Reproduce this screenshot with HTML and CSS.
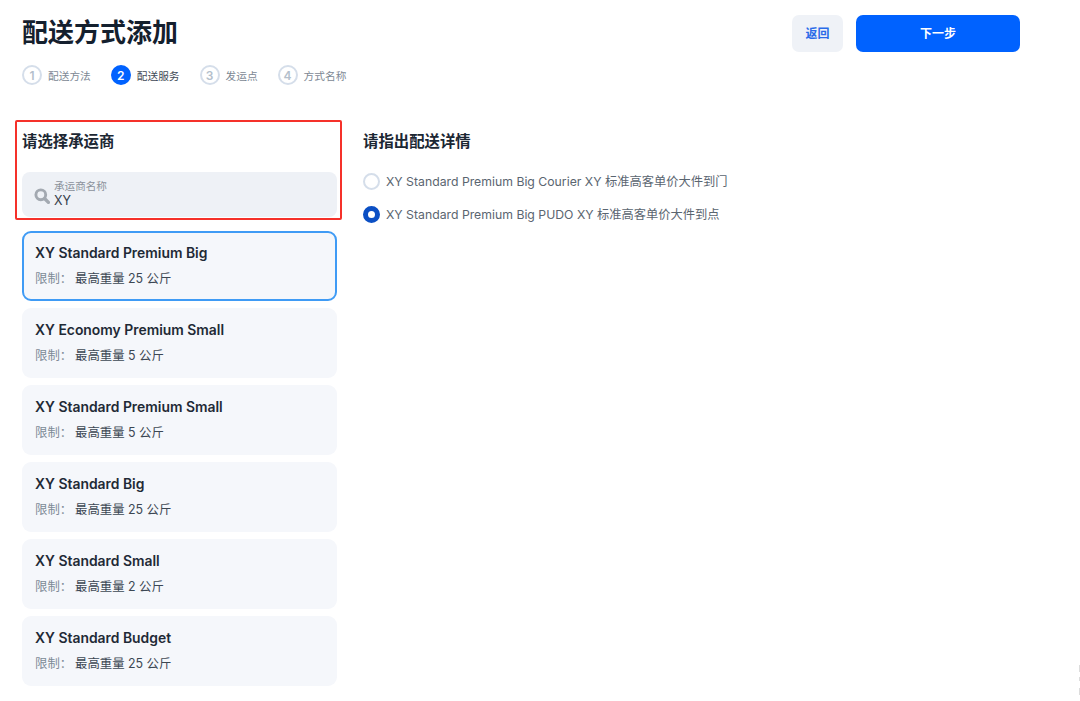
FILE: index.html
```html
<!DOCTYPE html>
<html lang="zh">
<head>
<meta charset="utf-8">
<title>配送方式添加</title>
<link rel="stylesheet" href="styles.css">
</head>
<body>
<div class="page">
  <header class="header">
    <div class="header-left">
      <h1 class="title">配送方式添加</h1>
      <ol class="steps">
        <li class="step"><span class="step-num">1</span><span class="step-label">配送方法</span></li>
        <li class="step step-active"><span class="step-num">2</span><span class="step-label">配送服务</span></li>
        <li class="step"><span class="step-num">3</span><span class="step-label">发运点</span></li>
        <li class="step"><span class="step-num">4</span><span class="step-label">方式名称</span></li>
      </ol>
    </div>
    <div class="actions">
      <button class="btn btn-back">返回</button>
      <button class="btn btn-next">下一步</button>
    </div>
  </header>
  <main class="main">
    <section class="col-left">
      <h2 class="heading">请选择承运商</h2>
      <div class="search">
        <svg class="search-icon" width="16" height="16" viewBox="0 0 16 16"><circle cx="6.8" cy="6.8" r="4.9" fill="none" stroke="#a3a9b1" stroke-width="2.9"/><path d="M10.8 10.8 14.4 14.4" stroke="#a3a9b1" stroke-width="3.4" stroke-linecap="round"/></svg>
        <div class="search-text">
          <div class="search-label">承运商名称</div>
          <div class="search-value">XY</div>
        </div>
      </div>
      <div class="cards">
        <div class="card card-selected"><div class="card-title">XY Standard Premium Big</div><div class="card-meta"><span class="meta-key">限制：</span><span class="meta-val">最高重量 25 公斤</span></div></div>
        <div class="card"><div class="card-title">XY Economy Premium Small</div><div class="card-meta"><span class="meta-key">限制：</span><span class="meta-val">最高重量 5 公斤</span></div></div>
        <div class="card"><div class="card-title">XY Standard Premium Small</div><div class="card-meta"><span class="meta-key">限制：</span><span class="meta-val">最高重量 5 公斤</span></div></div>
        <div class="card"><div class="card-title">XY Standard Big</div><div class="card-meta"><span class="meta-key">限制：</span><span class="meta-val">最高重量 25 公斤</span></div></div>
        <div class="card"><div class="card-title">XY Standard Small</div><div class="card-meta"><span class="meta-key">限制：</span><span class="meta-val">最高重量 2 公斤</span></div></div>
        <div class="card"><div class="card-title">XY Standard Budget</div><div class="card-meta"><span class="meta-key">限制：</span><span class="meta-val">最高重量 25 公斤</span></div></div>
      </div>
      <div class="highlight"></div>
    </section>
    <section class="col-right">
      <h2 class="heading">请指出配送详情</h2>
      <div class="radios">
        <div class="radio-row"><span class="radio"></span><span class="radio-label">XY Standard Premium Big Courier XY 标准高客单价大件到门</span></div>
        <div class="radio-row"><span class="radio radio-on"></span><span class="radio-label">XY Standard Premium Big PUDO XY 标准高客单价大件到点</span></div>
      </div>
    </section>
  </main>
  <div class="edge-marks"><span class="edge-mark edge-mark-a"></span><span class="edge-mark edge-mark-b"></span><span class="edge-mark edge-mark-c"></span></div>
</div>
</body>
</html>
```
FILE: styles.css
```css
* { box-sizing: border-box; }
html, body { margin: 0; padding: 0; background: #fff; }
body {
  font-family: Inter, "Noto Sans CJK SC", sans-serif;
  color: #1c2733;
  overflow: hidden;
}
.page { position: relative; width: 1080px; height: 701px; padding: 15px 60px 0 22px; }

.header { display: flex; justify-content: space-between; align-items: flex-start; }
.title { margin: 0; font-size: 26px; line-height: 36px; font-weight: 700; color: #14202e; }
.steps { display: flex; list-style: none; margin: 14px 0 0; padding: 0; gap: 20px; }
.step { display: flex; align-items: center; gap: 6px; height: 20px; }
.step-num {
  width: 20px; height: 20px; border-radius: 50%;
  border: 2px solid #d5deea; color: #b4bfcc;
  font-size: 12px; font-weight: 600;
  display: flex; align-items: center; justify-content: center;
}
.step-label { font-size: 10.7px; color: #7d8894; }
.step-active .step-num { background: #0062ff; border-color: #0062ff; color: #fff; }
.step-active .step-label { color: #3f4a56; }

.actions { display: flex; gap: 13px; }
.btn {
  height: 37px; border: 0; border-radius: 7px;
  font-family: inherit; font-size: 12px; font-weight: 600; padding: 0 0 2px;
}
.btn-back { width: 51px; background: #eff2f7; color: #2a6be8; }
.btn-next { width: 164px; background: #0062ff; color: #fff; }

.main { display: flex; gap: 26px; margin-top: 37px; }
.col-left { width: 315px; position: relative; }
.heading { margin: 0; font-size: 15.4px; line-height: 22px; font-weight: 700; color: #1c2733; padding-top: 9px; box-sizing: content-box; height: 22px; }

.search {
  margin-top: 19px; height: 45px; border-radius: 8px; background: #eef1f6;
  display: flex; align-items: center; padding-left: 12px; gap: 4px;
}
.search-icon { flex: none; margin-top: 2px; }
.search-text { margin-top: -1px; }
.search-label { font-size: 10.6px; line-height: 12px; color: #8b929b; margin-top: 1px; }
.search-value { font-size: 12.5px; line-height: 15px; color: #36404b; }

.cards { display: flex; flex-direction: column; gap: 7.1px; margin-top: 14px; }
.card {
  height: 70px; border-radius: 9px; background: #f5f7fb;
  padding: 12px 13px 0;
}
.card-selected { border: 2px solid #3f9bf5; padding: 10px 11px 0; }
.card-title { font-size: 13.9px; line-height: 20px; font-weight: 600; color: #1f2a36; }
.card-meta { display: flex; margin-top: 6px; font-size: 12.4px; line-height: 20px; }
.meta-key { width: 40px; color: #7d8a96; }
.meta-val { color: #3c4753; }

.highlight {
  position: absolute; left: -7px; top: -2px; width: 327px; height: 100px;
  border: 2px solid #f5312a; border-radius: 2px; pointer-events: none;
}

.col-right { flex: 1; }
.radios { display: flex; flex-direction: column; gap: 13px; margin-top: 18px; }
.radio-row { display: flex; align-items: center; gap: 6px; height: 20px; }
.radio { width: 17px; height: 17px; border-radius: 50%; border: 2px solid #d5deea; background: #fff; flex: none; }
.radio-on { border: 5px solid #0b4fc4; }
.radio-label { font-size: 12.25px; color: #5a6570; white-space: nowrap; }

.edge-marks { position: absolute; right: 0; top: 665px; width: 1px; height: 32px; }
.edge-mark { position: absolute; right: 0; width: 1px; background: #dcdcdc; }
.edge-mark-a { top: 0; height: 7px; }
.edge-mark-b { top: 12px; height: 4px; }
.edge-mark-c { top: 23px; height: 7px; }
```
